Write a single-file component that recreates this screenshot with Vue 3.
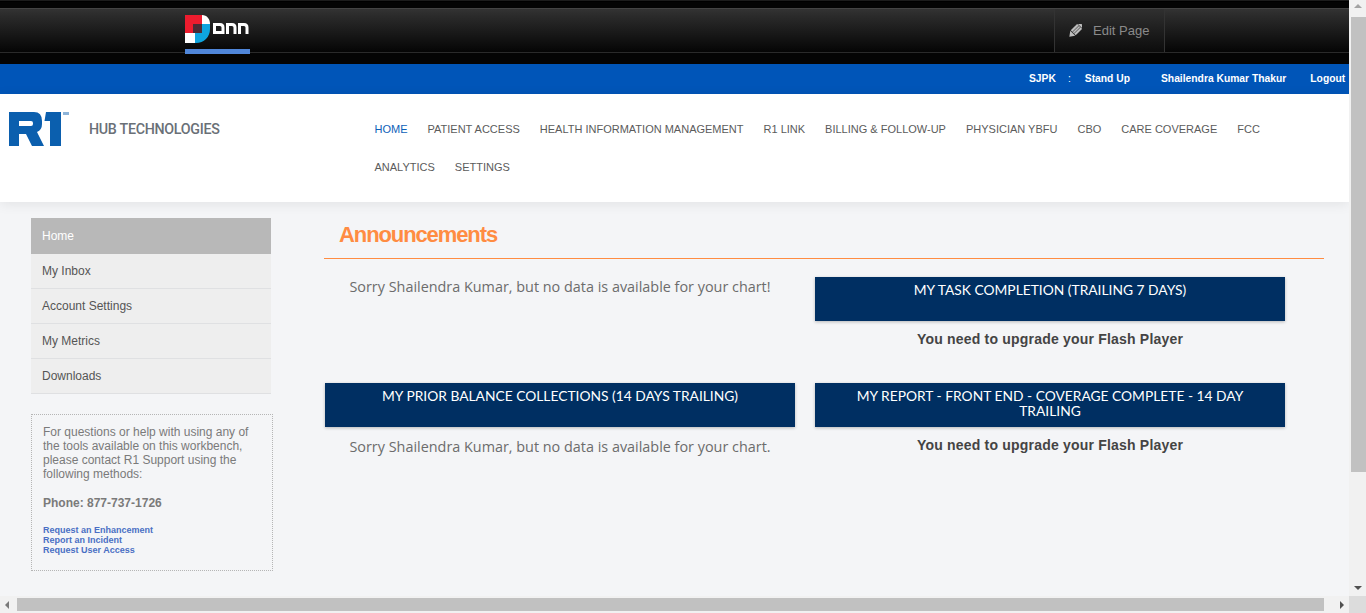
<template>
  <div class="page">
    <div class="viewport">
      <div class="control-bar">
        <div class="control-inner">
          <a class="dnn-logo">
            <svg width="65" height="39" viewBox="0 0 65 39">
              <rect x="0" y="0" width="17" height="18" fill="#ed1c2e" />
              <path d="M17 0C22 0 25 4 25 9H17Z" fill="#fff" />
              <path d="M17 9H25V14C25 22 19 28 11 28H10V18H17Z" fill="#0ea5df" />
              <rect x="8" y="9" width="9" height="9" fill="#4b2b35" />
              <rect x="0" y="18" width="10" height="10" fill="#fff" />
              <path d="M29.500 17.500V9.500H35Q38 9.500 38 12.500V17.500Z" fill="none" stroke="#fff" stroke-width="3" />
              <path d="M42.500 19V9.500H47Q50 9.500 50 12.500V19" fill="none" stroke="#fff" stroke-width="3" />
              <path d="M54.500 19V9.500H59Q62 9.500 62 12.500V19" fill="none" stroke="#fff" stroke-width="3" />
              <rect x="0" y="34" width="65" height="5" fill="#4f86d9" />
            </svg>
          </a>
          <div class="edit-page">
            <svg class="pencil" width="14" height="14" viewBox="0 0 14 14">
              <g transform="rotate(45 7 7)" fill="#bdbdbd">
                <rect x="3.500" y="-2.500" width="7" height="2.500" />
                <rect x="3.500" y="0.500" width="7" height="9" />
                <path d="M3.500 10.200H10.500L7 15Z" />
                <rect x="5.600" y="0.500" width="0.700" height="9" fill="#555" />
                <rect x="7.800" y="0.500" width="0.700" height="9" fill="#555" />
              </g>
            </svg>
            <span>Edit Page</span>
          </div>
        </div>
      </div>

      <div class="user-bar">
        <span class="sjpk">SJPK</span>
        <span class="colon">:</span>
        <span class="stand">Stand Up</span>
        <span class="name">Shailendra Kumar Thakur</span>
        <span class="logout">Logout</span>
      </div>

      <header class="site-header">
        <div class="brand">
          <svg class="r1" width="62" height="36" viewBox="0 0 62 36">
            <path fill-rule="evenodd" d="M0 1H25Q33 1 33 10V13Q33 19 28 21L35 35H23L17 23H10V35H0ZM10 10V15H22Q24 15 24 13V12Q24 10 22 10Z" fill="#0b5fae" />
            <path d="M37 1H52V35H41V10H35.500Z" fill="#0b5fae" />
            <rect x="54" y="1" width="6" height="3" fill="#8db4d9" />
          </svg>
          <span class="hub">HUB TECHNOLOGIES</span>
        </div>
        <nav class="main-nav">
          <a v-for="(item, i) in navItems" :key="item" :class="{ active: i === 0 }">{{ item }}</a>
        </nav>
      </header>

      <div class="content">
        <aside class="sidebar">
          <ul class="side-menu">
            <li v-for="(item, i) in sideItems" :key="item" :class="{ current: i === 0 }">{{ item }}</li>
          </ul>
          <div class="help-box">
            <p>For questions or help with using any of the tools available on this workbench, please contact R1 Support using the following methods:</p>
            <p class="phone">Phone: 877-737-1726</p>
            <div class="help-links">
              <a>Request an Enhancement</a>
              <a>Report an Incident</a>
              <a>Request User Access</a>
            </div>
          </div>
        </aside>

        <main class="main">
          <h1>Announcements</h1>
          <div class="widgets">
            <div class="widget">
              <p class="sorry first">Sorry Shailendra Kumar, but no data is available for your chart!</p>
            </div>
            <div class="widget">
              <h2>MY TASK COMPLETION (TRAILING 7 DAYS)</h2>
              <p class="flash">You need to upgrade your Flash Player</p>
            </div>
            <div class="widget">
              <h2>MY PRIOR BALANCE COLLECTIONS (14 DAYS TRAILING)</h2>
              <p class="sorry">Sorry Shailendra Kumar, but no data is available for your chart.</p>
            </div>
            <div class="widget">
              <h2>MY REPORT - FRONT END - COVERAGE COMPLETE - 14 DAY TRAILING</h2>
              <p class="flash">You need to upgrade your Flash Player</p>
            </div>
          </div>
        </main>
      </div>
    </div>

    <div class="vscroll">
      <span class="arrow up"></span>
      <div class="vtrack"><div class="vthumb"></div></div>
      <span class="arrow down"></span>
    </div>
    <div class="hscroll">
      <span class="arrow left"></span>
      <div class="htrack"><div class="hthumb"></div></div>
      <span class="arrow right"></span>
    </div>
    <div class="corner"></div>
  </div>
</template>

<script setup>
const navItems = [
  'HOME',
  'PATIENT ACCESS',
  'HEALTH INFORMATION MANAGEMENT',
  'R1 LINK',
  'BILLING & FOLLOW-UP',
  'PHYSICIAN YBFU',
  'CBO',
  'CARE COVERAGE',
  'FCC',
  'ANALYTICS',
  'SETTINGS',
];

const sideItems = ['Home', 'My Inbox', 'Account Settings', 'My Metrics', 'Downloads'];
</script>

<style>
html, body {
  margin: 0;
  overflow: hidden;
}
</style>

<style scoped>
* {
  box-sizing: border-box;
}
.page {
  display: grid;
  grid-template-columns: 1349px 17px;
  grid-template-rows: 596px 17px;
  width: 1366px;
  height: 613px;
  overflow: hidden;
  font-family: "Liberation Sans", Arial, sans-serif;
  background: #f4f5f7;
}
.viewport {
  overflow: hidden;
  background: #f4f5f7;
}

/* dnn control bar */
.control-bar {
  height: 64px;
  padding-top: 7px;
  background: #040404;
  border-top: 1px solid #1c1c1c;
  box-shadow: inset 0 1px 0 #000;
}
.control-inner {
  display: flex;
  justify-content: space-between;
  height: 45px;
  padding-left: 185px;
  padding-right: 184px;
  background: linear-gradient(#333 0, #2b2b2b 15%, #050505 100%);
  border-top: 1px solid #444;
  border-bottom: 1px solid #2a2a2a;
}
.dnn-logo {
  display: block;
  padding-top: 6px;
}
.dnn-logo svg {
  display: block;
}
.edit-page {
  display: flex;
  align-items: center;
  gap: 11px;
  width: 111px;
  padding-left: 13px;
  color: #8a8a8a;
  font-size: 13px;
  background: linear-gradient(#303030, #1a1a1a 60%, #0c0c0c);
  border-left: 1px solid #333;
  border-right: 1px solid #333;
}

/* blue user strip */
.user-bar {
  display: flex;
  align-items: center;
  height: 30px;
  padding: 0 0 2px 1029px;
  color: #fff;
  font-size: 10.300px;
  font-weight: 700;
  white-space: nowrap;
  background: #0055b8;
}
.colon {
  margin-left: 12px;
  font-weight: 400;
}
.stand {
  margin-left: 14px;
}
.name {
  margin-left: 31px;
}
.logout {
  margin-left: 24px;
}

/* logo + main nav */
.site-header {
  display: flex;
  height: 108px;
  background: #fff;
  box-shadow: 0 2px 12px rgba(0, 0, 0, 0.08);
  position: relative;
}
.brand {
  display: flex;
  align-items: flex-start;
  width: 364.500px;
  padding: 17px 0 0 9px;
}
.r1 {
  display: block;
  flex: none;
}
.hub {
  margin: 9px 0 0 18px;
  color: #6a7077;
  font-family: Roboto, sans-serif;
  font-size: 15px;
  font-weight: 500;
  line-height: 18px;
  white-space: nowrap;
  letter-spacing: -0.3px;
  transform: scaleX(0.95);
  transform-origin: left center;
}
.main-nav {
  display: flex;
  flex-wrap: wrap;
  align-content: flex-start;
  column-gap: 20px;
  width: 920px;
  padding: 16px 0 0 10px;
}
.main-nav a {
  height: 38px;
  line-height: 38px;
  color: #5b5b5b;
  font-size: 11px;
  white-space: nowrap;
}
.main-nav a.active {
  color: #0d5fb8;
}

.content {
  display: flex;
  height: 394px;
}

/* left column */
.sidebar {
  width: 293px;
  padding: 16px 0 0 31px;
}
.side-menu {
  width: 240px;
  margin: 0;
  padding: 0;
  list-style: none;
  background: #eee;
}
.side-menu li {
  height: 35px;
  padding-left: 11px;
  line-height: 34px;
  color: #555;
  font-size: 12px;
  border-bottom: 1px solid #dfe0e2;
}
.side-menu li.current {
  height: 36px;
  line-height: 36px;
  color: #fff;
  background: #b8b8b8;
  border-bottom: 0;
}
.help-box {
  width: 242px;
  height: 157px;
  margin-top: 20px;
  padding: 10px 11px 0;
  color: #7a7a7a;
  font-size: 12px;
  line-height: 14px;
  border: 1px dotted #b5b5b5;
}
.help-box p {
  margin: 0;
}
.help-box .phone {
  margin-top: 15px;
  font-weight: 700;
}
.help-links {
  display: flex;
  flex-direction: column;
  margin-top: 15px;
  color: #4a6fc4;
  font-size: 9px;
  font-weight: 700;
  line-height: 10px;
}

/* announcements */
.main {
  width: 1031px;
  padding-left: 31px;
}
h1 {
  height: 41px;
  margin: 16px 0 18px;
  padding: 4px 0 0 15px;
  color: #ff8c42;
  font-size: 22px;
  font-weight: 700;
  line-height: 25px;
  letter-spacing: -1.1px;
  border-bottom: 1px solid #ff8c42;
}
.widgets {
  display: grid;
  grid-template-columns: 470px 470px;
  grid-template-rows: 106px 106px;
  column-gap: 20px;
  margin-left: 1px;
}
h2 {
  height: 44px;
  margin: 0;
  padding: 5px 10px 0;
  color: #fff;
  font-family: Lato, sans-serif;
  font-size: 13.800px;
  font-weight: 400;
  line-height: 15px;
  text-align: center;
  background: #002f62;
  box-shadow: 0 1px 3px rgba(0, 0, 0, 0.25);
}
.sorry {
  margin: 10px 0 0;
  color: #6c6c6c;
  font-family: "Open Sans", sans-serif;
  font-size: 14.400px;
  line-height: 20px;
  text-align: center;
}
.sorry.first {
  margin-top: 0;
}
.flash {
  margin: 10px 0 0;
  color: #444;
  font-size: 14px;
  font-weight: 700;
  line-height: 17px;
  text-align: center;
  letter-spacing: 0.2px;
}

/* drawn scrollbars */
.vscroll {
  display: flex;
  flex-direction: column;
  background: #f1f1f1;
}
.vtrack {
  flex: 1;
}
.vthumb {
  width: 15px;
  height: 455px;
  margin-left: 2px;
  background: #c1c1c1;
}
.hscroll {
  display: flex;
  align-items: center;
  background: #f1f1f1;
}
.htrack {
  flex: 1;
  height: 100%;
}
.hthumb {
  width: 1307px;
  height: 13px;
  margin-top: 2px;
  background: #c1c1c1;
}
.corner {
  background: #dcdcdc;
}
.arrow {
  display: block;
  flex: none;
  width: 0;
  height: 0;
  border: 4px solid transparent;
}
.arrow.up {
  margin: 4px auto 9px;
  border-top: 0;
  border-bottom-color: #a3a3a3;
}
.arrow.down {
  margin: 0 auto 6px;
  border-bottom: 0;
  border-top-color: #505050;
}
.arrow.left {
  margin: 0 8px 0 5px;
  border-left: 0;
  border-right-color: #7a7a7a;
}
.arrow.right {
  margin: 0 5px 0 7px;
  border-right: 0;
  border-left-color: #505050;
}
</style>
